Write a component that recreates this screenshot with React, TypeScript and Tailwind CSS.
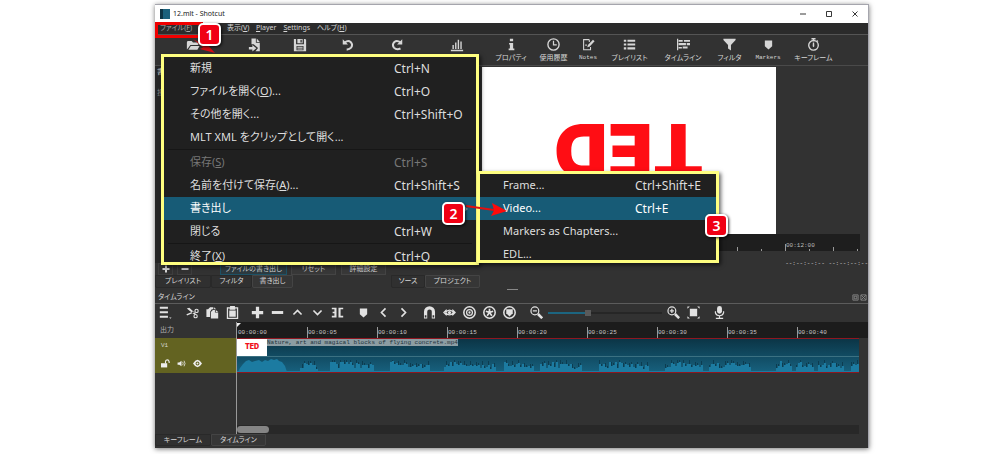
import React from "react";

type IconProps = { className?: string };
type IconFn = (p: IconProps) => React.ReactElement;

const glyph = (body: React.ReactNode): IconFn =>
  function Glyph({ className = "size-3.5" }: IconProps) {
    return (
      <svg viewBox="0 0 16 16" className={className} fill="currentColor" aria-hidden="true">
        {body}
      </svg>
    );
  };

const line = { fill: "none", stroke: "currentColor" } as const;

const FolderIcon = glyph(<path d="M1 5q0-1.500 1.500-1.500h4l1.500 1.500h4.500q1.500 0 1.500 1.500v1.500H5l-2.500 3.500L1 13zM5.500 9H15.500l-2.500 4.500H2.800z" />);
const ImportIcon = glyph(
  <path d="M4 0.500h5v5h4.500V15H8.500l3-3.500L6.500 7H4zM10 0.500l3.500 4H10zM5 8l4.500 3.700L5 15.500v-2.300H1V10.300h4z" />,
);
const SaveIcon = glyph(
  <path fillRule="evenodd" d="M1 1h2.500v6h9V1H14l1 1v13H1zM5 1h6v5H5zM8.500 2v3H10V2zM4 9v5h8V9zM5 10h6v1H5zM5 12h6v1H5z" />,
);
const UndoIcon = glyph(
  <>
    <path d="M2 1.500v6h6z" />
    <path {...line} strokeWidth="2.300" d="M4.500 5Q8 2 11 4.500q3 3 .5 6.500-2 2.300-5 2" />
  </>,
);
const RedoIcon = glyph(
  <>
    <path d="M14 1.500v6H8z" />
    <path {...line} strokeWidth="2.300" d="M12 5Q8 2 5 4.500q-3 3-.5 6.500 3 3 7.500 1" />
  </>,
);
const ChartIcon = glyph(<path d="M1 13.500h14V15H1zM2.800 8h1.600v4.500H2.800zM5.800 5h1.600v7.500H5.800zM8.800 2h1.600v10.500H8.800zM11.800 4h1.600v8.500h-1.600z" />);
const InfoIcon = glyph(<path d="M6 1h4v3H6zM5 6h5v7h1.500v2h-7v-2H6V8H5z" />);
const ClockIcon = glyph(
  <>
    <circle {...line} cx="8" cy="8" r="6.900" strokeWidth="1.700" />
    <path {...line} strokeWidth="1.500" d="M8 3.500V8.500h4" />
  </>,
);
const NotesIcon = glyph(
  <>
    <path {...line} strokeWidth="1.300" d="M9 2H2v12.500h8.500V11M9 2v3" />
    <path d="M13.500 2l2 2-6 6.500-3 1 .8-3zM4 8h2v1.500H4z" />
  </>,
);
const ListIcon = glyph(<path d="M1 2h3v2.500H1zM5.500 2H15v2.500H5.500zM1 6.700h3v2.500H1zM5.500 6.700H15v2.500H5.500zM1 11.500h3V14H1zM5.500 11.500H15V14H5.500z" />);
const TracksIcon = glyph(<path d="M0 1h1.500v14H0zM2 2.500h5v2H2zM8.500 2.500H16v2H8.500zM2 6h9v3H2zM12 6h4v3h-4zM2 11h4v2H2zM7 10.500h6v2.500H7z" />);
const FilterIcon = glyph(<path d="M0.500 1h15v1.500L9.800 8.500V15.500L6.200 13v-4.500L0.500 2.500z" />);
const MarkerIcon = glyph(<path d="M3.500 3h9v7L8 14 3.500 10z" />);
const StopwatchIcon = glyph(
  <>
    <circle {...line} cx="8" cy="9" r="5.900" strokeWidth="1.700" />
    <path d="M5.500 0h5v1.800h-5zM7.200 1h1.600v3H7.200zM12.500 2.500l1.500 1.500-1 1-1.500-1.500zM7.200 5.500h1.600L9 10l-1 1.500L7 10z" />
  </>,
);
const MenuIcon = glyph(<path d="M1 1h10v2.500H1zM1 6.500h10V9H1zM1 12h10v2.500H1zM12.500 14h3L14 15.800z" />);
const CutIcon = glyph(
  <>
    <path d="M1 3l3-.8 8 7-1.500 1.500zM0.500 10l.8 1.800L10 8V6z" />
    <circle {...line} cx="13" cy="6" r="2" strokeWidth="1.400" />
    <circle {...line} cx="11.800" cy="12.500" r="2" strokeWidth="1.400" />
  </>,
);
const CopyIcon = glyph(<path d="M0.500 4h2l2.500-2.500h4V4H7L5 7v6.500H0.500zM6 7.500L8.500 5H11v3h4v7.500H6zM12 5l3 2.500h-3zM10 1.500L12.500 4H10z" />);
const PasteIcon = glyph(
  <path fillRule="evenodd" d="M5 0h6V1.500h4v14.500H1V1.500h4zM2.600 3v11.500h10.800V3H11.500v1.500h-7V3zM4 5.500h8v7.700H4z" />,
);
const PlusIcon = glyph(<path d="M6 1h4v5h5v4h-5v5H6v-5H1V6h5z" />);
const MinusIcon = glyph(<path d="M1 6.200h14v3.600H1z" />);
const UpIcon = glyph(<path {...line} strokeWidth="2" d="M3 10.500L8 5.500l5 5" />);
const DownIcon = glyph(<path {...line} strokeWidth="2" d="M3 5.500l5 5 5-5" />);
const LeftIcon = glyph(<path {...line} strokeWidth="2" d="M10.500 3l-5 5 5 5" />);
const RightIcon = glyph(<path {...line} strokeWidth="2" d="M5.500 3l5 5-5 5" />);
const SplitIcon = glyph(<path d="M1 2h5.800v12H1v-2h3.200V9H2V7h2.200V4H1zM15 2H9.200v12H15v-2h-3.200V4H15z" />);
const MagnetIcon = glyph(
  <>
    <path {...line} strokeWidth="4" d="M3.200 15.500V7a4.800 4.800 0 0 1 9.600 0v8.500" />
    <path fill="#323232" d="M2.200 11.500h2V14h-2zM11.800 11.500h2V14h-2z" />
  </>,
);
const ScrubIcon = glyph(
  <>
    <path {...line} strokeWidth="1.500" d="M4.500 4.500L1 8l3.500 3.500M11.500 4.500L15 8l-3.500 3.500M3 8q5-6 10 0-5 6-10 0" />
    <circle cx="8" cy="8" r="2" />
  </>,
);
const ring = <circle {...line} cx="8" cy="8" r="7" strokeWidth="1.900" />;
const RippleIcon = glyph(
  <>
    {ring}
    <circle {...line} cx="8" cy="8" r="3.600" strokeWidth="1.500" />
    <circle cx="8" cy="8" r="1.400" />
  </>,
);
const RippleAllIcon = glyph(
  <>
    {ring}
    <path {...line} strokeWidth="2.100" d="M8 8V3.300M8 8l4.500-1.500M8 8l2.900 3.900M8 8l-2.900 3.900M8 8L3.500 6.500" />
  </>,
);
const RippleMarkersIcon = glyph(
  <>
    {ring}
    <path d="M4 4h8v5l-4 4-4-4z" />
  </>,
);
const ZoomOutIcon = glyph(
  <>
    <circle {...line} cx="6" cy="6" r="4.800" strokeWidth="1.500" />
    <path {...line} strokeWidth="1.500" d="M3.500 6h5" />
    <path {...line} strokeWidth="3.200" d="M9.800 9.800l5.200 5.200" />
  </>,
);
const ZoomInIcon = glyph(
  <>
    <circle {...line} cx="6" cy="6" r="4.800" strokeWidth="1.500" />
    <path {...line} strokeWidth="1.500" d="M3.500 6h5M6 3.500v5" />
    <path {...line} strokeWidth="3.200" d="M9.800 9.800l5.200 5.200" />
  </>,
);
const FitIcon = glyph(<path d="M3.500 3.500h9v9h-9zM0.500 0.500h3l-3 3zM15.500 0.500v3l-3-3zM0.500 15.500v-3l3 3zM15.500 15.500h-3l3-3z" />);
const MicIcon = glyph(
  <>
    <rect x="5" y="0" width="6" height="9.500" rx="3" />
    <path {...line} strokeWidth="1.500" d="M3 6.500v2q1 3.500 5 3.500t5-3.500v-2M8 12v3M3.500 15.200h9" />
  </>,
);
const LockIcon = glyph(
  <>
    <path d="M0 7.500h11V15H0z" />
    <path {...line} strokeWidth="2" d="M8 8V5q0-3.500 3-3.500t3.500 3.500v2" />
  </>,
);
const SpeakerIcon = glyph(
  <>
    <path d="M1 6h3l4-3v10l-4-3H1z" />
    <path {...line} strokeWidth="1.400" d="M10 5q2 3 0 6M12.500 3q3.500 5 0 10" />
  </>,
);
const EyeIcon = glyph(<path fillRule="evenodd" d="M0 8q8-13 16 0-8 13-16 0zM8 4.500a3.500 3.500 0 1 0 0 7 3.500 3.500 0 0 0 0-7zM8 6.300a1.700 1.700 0 1 1 0 3.400 1.700 1.700 0 0 1 0-3.400z" />);

const UI = "font-['Noto_Sans','Noto_Sans_CJK_JP',sans-serif] [font-feature-settings:'palt']";
const MONO = "font-['Liberation_Mono','Noto_Sans_CJK_JP',monospace]";

const tools: { label: string; width: string; Icon: IconFn }[] = [
  { label: "ファイルを開く", width: "w-[76px]", Icon: FolderIcon },
  { label: "その他を開く", width: "w-[48px]", Icon: ImportIcon },
  { label: "保存", width: "w-[42px]", Icon: SaveIcon },
  { label: "元に戻す", width: "w-[54px]", Icon: UndoIcon },
  { label: "やり直し", width: "w-[44px]", Icon: RedoIcon },
  { label: "ピークメーター", width: "w-[75px]", Icon: ChartIcon },
];

const panels: { label: string; width: string; latin?: boolean; Icon: IconFn }[] = [
  { label: "プロパティ", width: "w-[34px]", Icon: InfoIcon },
  { label: "使用履歴", width: "w-[27px]", Icon: ClockIcon },
  { label: "Notes", width: "w-[18px]", latin: true, Icon: NotesIcon },
  { label: "プレイリスト", width: "w-[41px]", Icon: ListIcon },
  { label: "タイムライン", width: "w-[42px]", Icon: TracksIcon },
  { label: "フィルタ", width: "w-[27px]", Icon: FilterIcon },
  { label: "Markers", width: "w-[26px]", latin: true, Icon: MarkerIcon },
  { label: "キーフレーム", width: "w-[41px]", Icon: StopwatchIcon },
];

const timelineTools: { lead: string; items: [string, IconFn][] }[] = [
  { lead: "", items: [["メニュー", MenuIcon]] },
  { lead: "ml-[7px]", items: [["切り取り", CutIcon], ["コピー", CopyIcon], ["貼り付け", PasteIcon]] },
  {
    lead: "ml-[5px]",
    items: [["追加", PlusIcon], ["削除", MinusIcon], ["リフト", UpIcon], ["上書き", DownIcon], ["分割", SplitIcon]],
  },
  { lead: "ml-[6px]", items: [["マーカー", MarkerIcon], ["前のマーカー", LeftIcon], ["次のマーカー", RightIcon]] },
  {
    lead: "ml-[6px]",
    items: [
      ["スナップ", MagnetIcon],
      ["スクラブ", ScrubIcon],
      ["リップル", RippleIcon],
      ["全トラックをリップル", RippleAllIcon],
      ["マーカーをリップル", RippleMarkersIcon],
    ],
  },
  { lead: "ml-[7px]", items: [["縮小", ZoomOutIcon]] },
];

function ToolButton({ label, Icon }: { label: string; Icon: IconFn }) {
  return (
    <button type="button" aria-label={label} className="flex h-full w-5 shrink-0 items-center justify-center">
      <Icon className="size-[13px]" />
    </button>
  );
}

type Entry = { label: React.ReactNode; keys?: string; active?: boolean; disabled?: boolean; sub?: boolean } | null;

const fileEntries: Entry[] = [
  { label: "新規", keys: "Ctrl+N" },
  { label: <>ファイルを開く(<u>O</u>)...</>, keys: "Ctrl+O" },
  { label: "その他を開く...", keys: "Ctrl+Shift+O" },
  { label: "MLT XML をクリップとして開く..." },
  null,
  { label: <>保存(<u>S</u>)</>, keys: "Ctrl+S", disabled: true },
  { label: <>名前を付けて保存(<u>A</u>)...</>, keys: "Ctrl+Shift+S" },
  { label: "書き出し", active: true, sub: true },
  { label: "閉じる", keys: "Ctrl+W" },
  null,
  { label: <>終了(<u>X</u>)</>, keys: "Ctrl+Q" },
];

const exportEntries: Entry[] = [
  { label: "Frame...", keys: "Ctrl+Shift+E" },
  { label: "Video...", keys: "Ctrl+E", active: true },
  { label: "Markers as Chapters..." },
  { label: "EDL..." },
];

function Menu({ entries, place, pad, column }: { entries: Entry[]; place: string; pad: string; column: string }) {
  return (
    <div
      role="menu"
      className={`absolute overflow-hidden border-[3px] border-[#ffff80] bg-[#202020] text-[12px] text-[#dedede] shadow-[2px_2px_4px_rgba(0,0,0,0.6)] ${place}`}
    >
      {entries.map((e, i) =>
        e === null ? (
          <div key={i} role="separator" className="mx-1 mb-px h-px bg-[#161616]" />
        ) : (
          <button
            key={i}
            type="button"
            role="menuitem"
            disabled={e.disabled}
            className={`flex h-[23px] w-full items-center text-left whitespace-nowrap ${pad} ${
              e.active ? "bg-[#175b76] text-white" : e.disabled ? "text-[#777]" : ""
            }`}
          >
            <span className={`shrink-0 text-[11px] ${column}`}>{e.label}</span>
            {e.keys && <span>{e.keys}</span>}
            {e.sub && (
              <svg viewBox="0 0 4 6" className="mr-2 ml-auto h-1.5 w-1" fill="#8fa5ae" aria-hidden="true">
                <path d="M0 0l4 3-4 3z" />
              </svg>
            )}
          </button>
        ),
      )}
    </div>
  );
}

function Badge({ n, place }: { n: number; place: string }) {
  return (
    <div
      className={`absolute flex size-[23px] items-center justify-center rounded-[5px] border-2 border-white bg-[#f00014] font-['Noto_Sans',sans-serif] text-[14px] font-semibold text-white shadow-[1px_1px_3px_rgba(0,0,0,0.8)] ${place}`}
    >
      {n}
    </div>
  );
}

function Tab({ children, width, active }: { children: React.ReactNode; width: string; active?: boolean }) {
  return (
    <button
      type="button"
      className={`flex shrink-0 items-center justify-center rounded-b-[2px] border whitespace-nowrap ${width} ${
        active ? "border-[#444] bg-[#363636]" : "border-[#292929] bg-[#303030]"
      }`}
    >
      {children}
    </button>
  );
}

const speech: [number, number][] = [
  [63, 80], [93, 137], [153, 192], [207, 259], [267, 296], [303, 345], [362, 411],
  [428, 465], [472, 514], [539, 555], [559, 576], [581, 606], [614, 622],
];

function barHeight(x: number, from: number, to: number) {
  const noise = Math.abs(Math.sin(x * 12.9898) * 43758.5453) % 1;
  const fade = 1 - (0.45 * (x - from)) / (to - from);
  return Math.round(2 + (noise * 8 + 2) * fade);
}

function Waveform() {
  let light = "";
  let dark = "";
  for (const [from, to] of speech) {
    for (let x = from; x < to; x += 2) {
      const h = barHeight(x, from, to);
      const next = Math.min(12, h + (x % 3) * 2);
      light += `M${x} 15V${15 - h}h2V15z`;
      dark += `M${x} 15V${15 - next}h1V15z`;
    }
  }
  return (
    <svg viewBox="0 0 622 15" preserveAspectRatio="none" className="h-[15px] w-full" aria-hidden="true">
      <path fill="#0c3c50" d={dark} />
      <path fill="#1c7ba1" d={light} />
      <path
        fill="#1c7ba1"
        d="M1 15L3 11 6 7 9 4 12 3 15 5 18 4 22 3 25 5 28 3 31 4 34 2 37 3 40 2 42 4 45 5 48 9 50 15zM0 14h622v1H0z"
      />
    </svg>
  );
}

const stamps = ["00:00:00", "00:00:05", "00:00:10", "00:00:15", "00:00:20", "00:00:25", "00:00:30", "00:00:35", "00:00:40"];
const tickHeights = ["h-0.5", "h-1"];

export default function App() {
  return (
    <main className={`bg-white pt-1 pr-[131px] pb-1.5 pl-[155px] ${UI}`}>
      <div className="relative border-t border-r border-[#a5a5ad] bg-[#323232] text-[#d6d6d6] shadow-[0_1px_5px_rgba(0,0,0,0.55)]">
        <header className="flex h-[18px] items-center bg-white pl-[5px] text-[7px] text-[#222]">
          <span className="size-[10px] border-l-[3px] border-[#0e3444] bg-[#1b617c]" />
          <h1 className="ml-[3px]">12.mlt - Shotcut</h1>
          <div className="ml-auto flex">
            {["M2 8h12", "M3 3h10v10H3z", "M3 3l10 10M13 3L3 13"].map((d, i) => (
              <button key={d} type="button" aria-label={["最小化", "最大化", "閉じる"][i]} className="flex w-[26px] justify-center">
                <svg viewBox="0 0 16 16" className="size-2" fill="none" stroke="#222" strokeWidth="1.800">
                  <path d={d} />
                </svg>
              </button>
            ))}
          </div>
        </header>

        <nav className="flex h-[11px] items-center gap-[7px] bg-[#2b2b2b] pl-[5px] text-[7px] whitespace-nowrap">
          <button type="button" className="w-[30px] text-left text-[#a8a8a8]">ファイル(<u>F</u>)</button>
          <button type="button" aria-label="編集" className="w-[23px]" />
          <button type="button" className="w-[22px]">表示(<u>V</u>)</button>
          <button type="button"><u>P</u>layer</button>
          <button type="button"><u>S</u>ettings</button>
          <button type="button">ヘルプ(<u>H</u>)</button>
        </nav>

        <div className={`flex h-8 overflow-hidden border-t border-b border-t-[#555] border-b-[#4a4a4a] text-[7px] ${MONO}`}>
          {tools.map(({ label, width, Icon }) => (
            <button key={label} type="button" aria-label={label} className={`flex shrink-0 justify-center pt-[3px] ${width}`}>
              <Icon />
            </button>
          ))}
          <div className="flex gap-3">
            {panels.map(({ label, width, latin, Icon }) => (
              <button key={label} type="button" className={`flex shrink-0 flex-col items-center pt-[3px] ${width}`}>
                <Icon className="size-[13px] shrink-0" />
                <span className={`leading-[14px] whitespace-nowrap ${latin ? "text-[6px]" : ""}`}>{label}</span>
              </button>
            ))}
          </div>
        </div>

        <div className="flex h-[225px]">
          <section className={`flex w-[321px] shrink-0 flex-col text-[7px] ${MONO}`}>
            <div className="flex-1 bg-[#262626] pl-0.5">
              <div className="leading-[13px]">書き出し</div>
              <div className="pt-2 leading-[13px] text-[#888]">投稿</div>
            </div>
            <div className="flex h-3 items-stretch pl-[3px]">
              <button type="button" aria-label="追加" className="flex w-[15px] items-center justify-center border border-[#3e3e3e]"><PlusIcon className="size-2" /></button>
              <button type="button" aria-label="削除" className="ml-1 flex w-[15px] items-center justify-center border border-[#3e3e3e]"><MinusIcon className="size-2" /></button>
              <button type="button" className="ml-[28px] flex w-[67px] items-center justify-center border border-[#1d5266] bg-[#2c3a40] whitespace-nowrap">ファイルの書き出し</button>
              <button type="button" className="ml-1 flex w-[45px] items-center justify-center border border-[#444] bg-[#383838]">リセット</button>
              <button type="button" className="ml-[5px] flex w-[45px] items-center justify-center border border-[#444] bg-[#383838]">詳細設定</button>
            </div>
            <div className="flex h-[13px] items-stretch">
              <Tab width="w-[56px]">プレイリスト</Tab>
              <Tab width="w-[41px]">フィルタ</Tab>
              <Tab width="w-[41px]" active>書き出し</Tab>
            </div>
            <div className="h-[3px]" />
          </section>

          <section className="flex min-w-0 flex-1 flex-col">
            <div className="flex pt-px pl-1.5">
              <div className="flex h-[167px] w-[294px] items-center justify-center bg-white">
                <span className="rotate-180 font-['Inter',sans-serif] text-[74px] leading-none font-black text-[#ff0d14] [font-feature-settings:normal]">
                  TED
                </span>
              </div>
            </div>
            <div className={`mr-2 flex h-[17px] items-end overflow-hidden bg-[#1e1e1e] pl-[21px] text-[6px] text-[#bbb] ${MONO}`}>
              {Array.from({ length: 16 }, (_, i) => (
                <div key={i} className={`w-6 shrink-0 border-l border-[#999] whitespace-nowrap ${i === 12 ? "h-[7px] leading-[4px]" : tickHeights[i % 2 === 0 ? 1 : 0]}`}>
                  {i === 12 ? "00:12:00" : ""}
                </div>
              ))}
            </div>
            <div className={`flex h-[25px] items-center justify-end overflow-hidden text-[6px] whitespace-nowrap text-[#ddd] ${MONO}`}>
              --:--:--:-- --:--:--:--
            </div>
            <div className="flex-1" />
            <div className="mb-px ml-[31px] h-px w-[11px] bg-[#888]" />
          </section>
        </div>

        <div className={`absolute top-[270px] left-[236px] flex h-[13px] items-stretch text-[7px] ${MONO}`}>
          <Tab width="w-[34px]">ソース</Tab>
          <Tab width="w-[55px]" active>プロジェクト</Tab>
        </div>

        <section>
          <div className="flex h-3 items-center justify-between pl-[3px] text-[7px]">
            <h2>タイムライン</h2>
            <div className="flex gap-px pr-px text-[#888]">
              {["M2 2h12v12H2zM5 5h6v6H5z", "M2 2h12v12H2zM3 3l10 10M13 3L3 13"].map((d, i) => (
                <button key={d} type="button" aria-label={["切り離す", "パネルを閉じる"][i]}>
                  <svg viewBox="0 0 16 16" className="size-[7px]" fill="none" stroke="currentColor" strokeWidth="2">
                    <path d={d} />
                  </svg>
                </button>
              ))}
            </div>
          </div>
          <div className="flex h-[19px] items-center border-t border-[#5c5c5c] pb-px text-[#e2e2e2]">
            {timelineTools.map((g, i) => (
              <div key={i} className={`flex h-full ${g.lead}`}>
                {g.items.map(([label, Icon]) => (
                  <ToolButton key={label} label={label} Icon={Icon} />
                ))}
              </div>
            ))}
            <input
              type="range"
              aria-label="ズーム"
              defaultValue={34}
              className="mr-px ml-0.5 h-[7px] w-[114px] appearance-none bg-transparent [&::-webkit-slider-runnable-track]:h-0.5 [&::-webkit-slider-runnable-track]:bg-[linear-gradient(to_right,#1c6580_34%,#262626_34%)] [&::-webkit-slider-thumb]:-mt-0.5 [&::-webkit-slider-thumb]:size-1.5 [&::-webkit-slider-thumb]:appearance-none [&::-webkit-slider-thumb]:bg-[#5a5a5a]"
            />
            <ToolButton label="拡大" Icon={ZoomInIcon} />
            <ToolButton label="全体表示" Icon={FitIcon} />
            <div className="ml-[6px] flex h-full">
              <ToolButton label="録音" Icon={MicIcon} />
            </div>
          </div>

          <div className="flex">
            <div className="w-[81px] shrink-0">
              <div className="flex h-4 items-center pl-[5px] text-[7px] text-[#b0b0b0]">出力</div>
              <div className="flex h-[35px] flex-col bg-[#636321] pl-[6px]">
                <span className={`pt-[3px] text-[6px] leading-[9px] ${MONO}`}>V1</span>
                <div className="flex items-center gap-[7px] pt-[9px] text-[#eee]">
                  <button type="button" aria-label="ロック"><LockIcon className="size-[9px]" /></button>
                  <button type="button" aria-label="ミュート"><SpeakerIcon className="size-[9px]" /></button>
                  <button type="button" aria-label="非表示"><EyeIcon className="size-[9px]" /></button>
                </div>
              </div>
            </div>
            <div className="min-w-0 flex-1 border-l border-[#999]">
              <div className={`relative flex h-4 items-end overflow-hidden bg-[#1c1c1c] text-[6px] text-[#c8c8c8] ${MONO}`}>
                {stamps.map((s, i) => (
                  <div key={s} className={`h-[11px] w-[70px] shrink-0 border-l leading-[12px] ${i === 0 ? "border-transparent" : "border-[#999]"}`}>
                    {s}
                  </div>
                ))}
                <svg viewBox="0 0 4 4" className="absolute top-px left-0 size-1" fill="#eee" aria-hidden="true">
                  <path d="M0 0h4L0 4z" />
                </svg>
              </div>
              <div className="mr-[9px] flex h-[35px] flex-col overflow-hidden border-t border-b border-[#8f1720] bg-[linear-gradient(#0b3546,#17607d)]">
                <div className="flex h-[17px] items-start">
                  <div className="flex h-full w-[30px] shrink-0 items-center justify-center bg-white font-['Inter',sans-serif] text-[7px] font-black text-[#f0101c]">
                    TED
                  </div>
                  <div className={`h-[7px] bg-[#8c9da3] text-[6px] leading-[8px] whitespace-nowrap text-[#22323a] ${MONO}`}>
                    Nature, art and magical blocks of flying concrete.mp4
                  </div>
                </div>
                <div className="h-px shrink-0 bg-[#3b7182]" />
                <Waveform />
              </div>
              <div className="h-[52px]" />
              <div className="mr-[9px] flex h-[9px] items-center bg-[#282828]">
                <div className="h-[7px] w-8 rounded-full bg-[#858585]" />
              </div>
            </div>
          </div>
          <div className={`flex h-3.5 items-stretch pb-0.5 text-[7px] ${MONO}`}>
            <Tab width="w-[56px]">キーフレーム</Tab>
            <Tab width="w-[55px]" active>タイムライン</Tab>
          </div>
        </section>

        <Menu entries={fileEntries} place="top-[49px] left-[6px] h-[211px] w-[318px]" pad="pl-[26px]" column="w-[204px]" />
        <Menu entries={exportEntries} place="top-[166px] left-[322px] h-[92px] w-[242px]" pad="pl-[23px]" column="w-[132px]" />

        <div className="absolute top-[17px] left-0 h-4 w-[48px] border-[3px] border-[#f00000]" />
        <svg viewBox="0 0 24 14" className="absolute top-[34px] left-[38px] h-[14px] w-6" aria-hidden="true">
          <path fill="#d40c14" d="M0 0L11 6l1-3 10 11-15-4 3-1.500z" />
        </svg>
        <Badge n={1} place="top-[18px] left-[43px]" />
        <svg viewBox="0 0 42 14" className="absolute top-[198px] left-[311px] h-[14px] w-[42px]" aria-hidden="true">
          <path stroke="#e01010" strokeWidth="2" d="M0 3l28 4" />
          <path fill="#ff0a0a" d="M26 0l15 8-16 5 3-5.500z" />
        </svg>
        <Badge n={2} place="top-[197px] left-[287px]" />
        <Badge n={3} place="top-[209px] left-[550px]" />
      </div>
    </main>
  );
}
